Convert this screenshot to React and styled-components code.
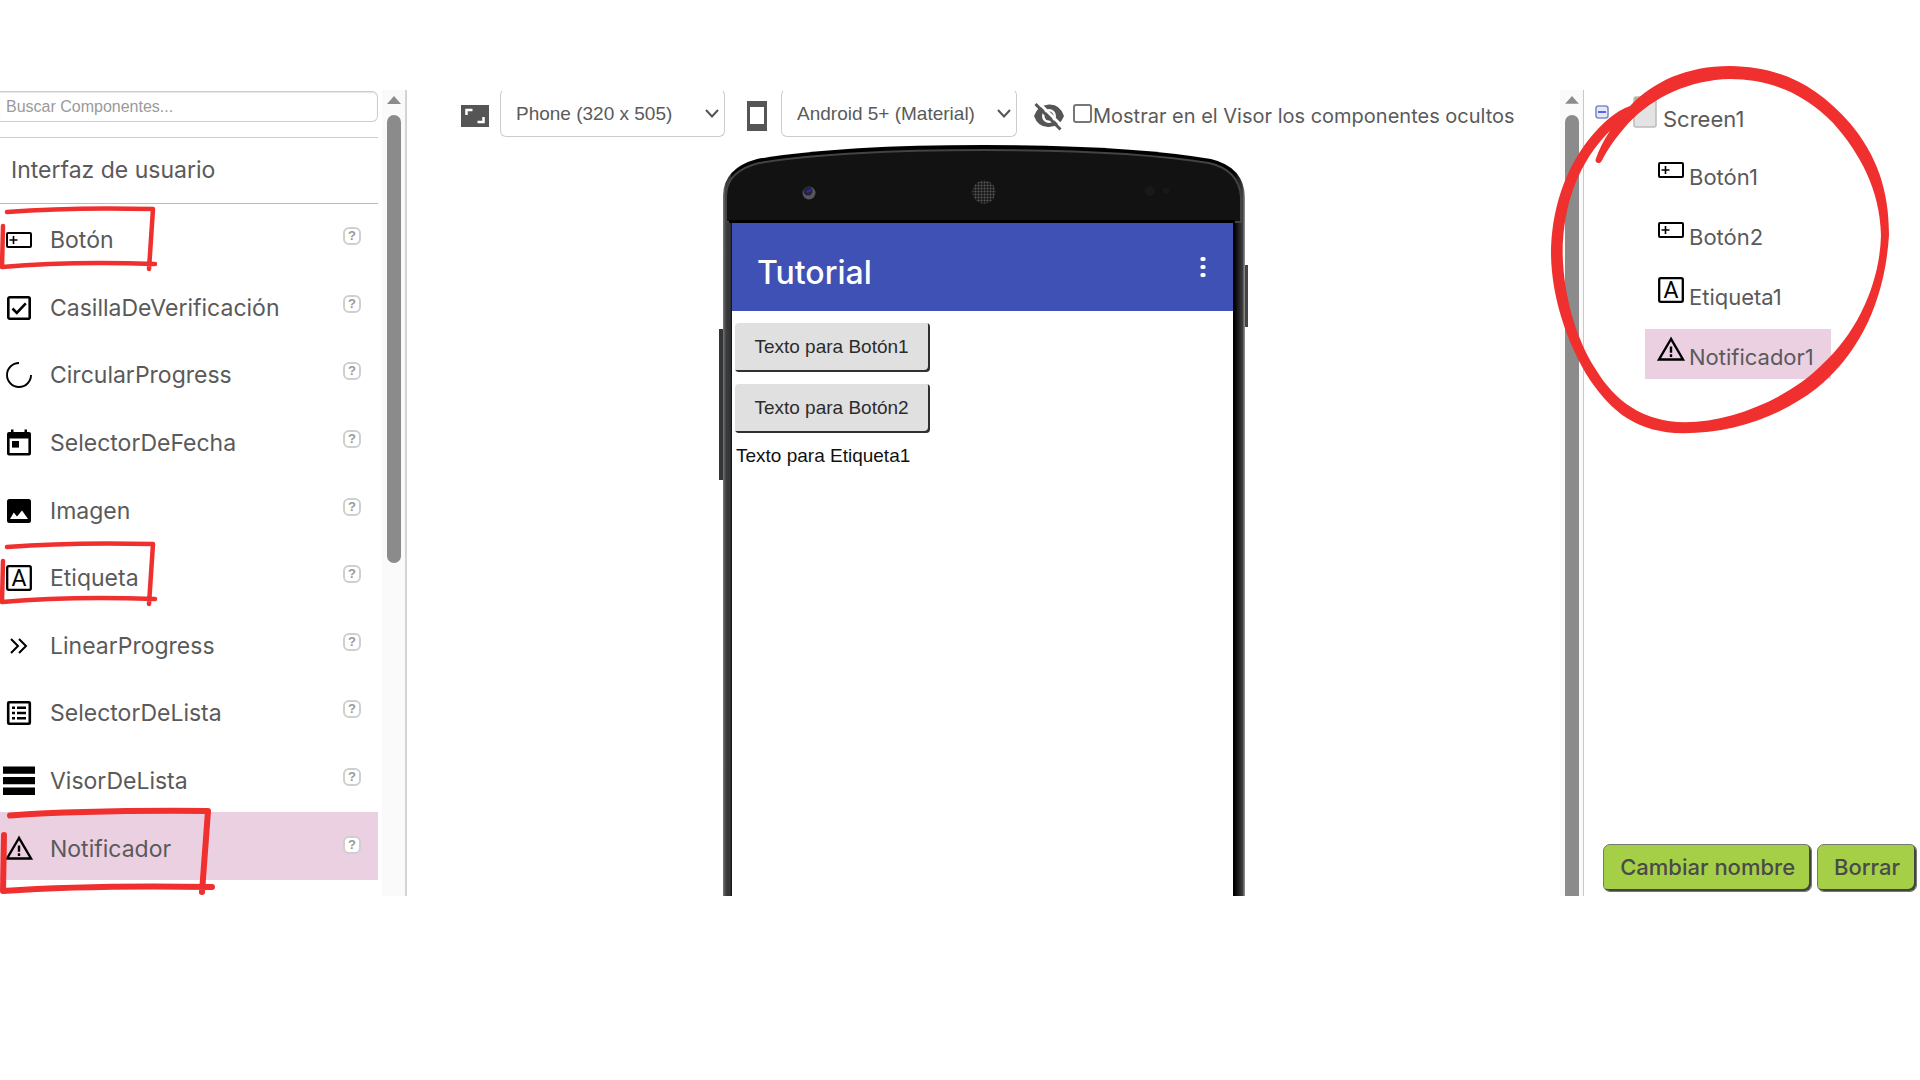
import React from "react";
import styled, { createGlobalStyle } from "styled-components";

const GlobalStyle = createGlobalStyle`
  *, *::before, *::after { box-sizing: border-box; }
  body {
    margin: 0;
    background: #fff;
    color: #5a5a5a;
    font-family: Inter, "Open Sans", sans-serif;
  }
`;

const ARIAL = '"Liberation Sans", Arial, sans-serif';
const RED = "#ef302e";
const PINK = "#ebd0e2";

const Page = styled.main`
  padding: 90px 0;
  overflow: hidden;
`;

const Workspace = styled.div`
  display: grid;
  grid-template-columns: 407px minmax(0, 1fr) 336px;
  min-height: 806px;
`;

/* Palette */

const PalettePanel = styled.aside`
  position: relative;
  display: flex;
  justify-content: space-between;
  border-right: 2px solid #d4d4d4;
`;

const PaletteColumn = styled.div`
  display: flex;
  flex-direction: column;
  width: 378px;
  padding: 1px 0 16px;
`;

const SearchInput = styled.input`
  height: 31px;
  margin: 0 0 15px;
  padding: 0 6px;
  border: 1px solid #ccc;
  border-left: 0;
  border-radius: 0 6px 6px 0;
  background: #fff;
  font: 16px ${ARIAL};
  outline: none;
  box-shadow: inset 0 1px 1px #e6e6e6;
  &::placeholder { color: #9a9a9a; opacity: 1; }
`;

const CategoryTitle = styled.h2`
  display: flex;
  align-items: center;
  height: 67px;
  margin: 0;
  padding: 0 11px 2px;
  border-top: 1px solid #ccc;
  border-bottom: 1px solid #bbb;
  font-size: 23px;
  font-weight: 400;
`;

const ComponentList = styled.ul`
  display: grid;
  grid-auto-rows: 1fr;
  flex: 1;
  margin: 0;
  padding: 0;
  list-style: none;
`;

const ComponentRow = styled.li`
  display: flex;
  align-items: center;
  padding: 5px 17px 0 3px;
  background: ${(p) => (p.$active ? PINK : "transparent")};
`;

const RowIcon = styled.svg`
  flex: none;
  width: 32px;
  height: 32px;
`;

const RowName = styled.span`
  flex: 1;
  padding-left: 15px;
  font-size: 23px;
  line-height: 32px;
`;

const HelpButton = styled.button`
  width: 18px;
  height: 18px;
  margin-bottom: 8px;
  padding: 0;
  border: 2px solid #cfcfcf;
  border-radius: 6px;
  background: #fff;
  color: #999;
  font: bold 13px/14px ${ARIAL};
`;

const Scrollbar = styled.div`
  display: flex;
  flex-direction: column;
  align-items: center;
  width: 23px;
  padding: 6px 0 0;
  background: #fafafa;
`;

const ScrollArrow = styled.svg`
  width: 14px;
  height: 8px;
  margin-bottom: 11px;
`;

const ScrollThumb = styled.div`
  width: 14px;
  height: ${(p) => p.$height};
  border-radius: ${(p) => (p.$cut ? "7px 7px 0 0" : "7px")};
  background: #8b8b8b;
`;

/* Viewer */

const ViewerPanel = styled.section`
  display: flex;
  justify-content: space-between;
  overflow: hidden;
  border-right: 1px solid #c8c8c8;
`;

const Viewer = styled.div`
  flex: 1;
  display: flex;
  flex-direction: column;
  align-items: center;
  height: 806px;
  overflow: hidden;
`;

const Toolbar = styled.div`
  display: flex;
  align-items: center;
  align-self: flex-start;
  flex: none;
  height: 48px;
  margin: -1px 0 8px;
  padding-left: 54px;
`;

const ToolIcon = styled.svg`
  flex: none;
  width: ${(p) => p.$width}px;
  height: 32px;
  margin-top: 6px;
`;

const SelectBox = styled.label`
  position: relative;
  margin: 0 ${(p) => p.$after}px 0 ${(p) => p.$before}px;
`;

const Select = styled.select`
  appearance: none;
  display: block;
  width: ${(p) => p.$width}px;
  height: 48px;
  padding: 0 15px;
  border: 1px solid #ccc;
  border-top-color: #fff;
  border-radius: 6px;
  background: #fff;
  color: #5a5a5a;
  font: 19px ${ARIAL};
`;

const Chevron = styled.svg`
  position: absolute;
  right: 6px;
  top: 20px;
  width: 14px;
  height: 9px;
  pointer-events: none;
`;

const HiddenToggle = styled.label`
  display: flex;
  align-items: center;
  font-size: 20px;
  line-height: 28px;
  white-space: nowrap;
`;

const Checkbox = styled.input`
  appearance: none;
  width: 19px;
  height: 19px;
  margin: 0 1px 0 9px;
  border: 2px solid #777;
  border-radius: 3px;
  background: #fff;
`;

const ToggleText = styled.span`
  padding-top: 6px;
`;

const Phone = styled.div`
  position: relative;
  flex: none;
  width: 529px;
  height: 760px;
  padding: 78px 15px 0 13px;
`;

const PhoneShell = styled.svg`
  position: absolute;
  inset: 0;
  width: 529px;
  height: 760px;
`;

const PhoneScreen = styled.div`
  position: relative;
  height: 100%;
  background: #fff;
  font-family: ${ARIAL};
`;

const AppBar = styled.header`
  display: flex;
  align-items: center;
  justify-content: space-between;
  height: 88px;
  padding: 0 26px 0 25px;
  background: #3f51b5;
  color: #fff;
`;

const AppTitle = styled.h1`
  margin: 0;
  padding-top: 10px;
  font: 500 32px Inter, sans-serif;
`;

const MenuButton = styled.button`
  display: flex;
  padding: 0;
  border: 0;
  background: none;
`;

const AppBody = styled.div`
  display: flex;
  flex-direction: column;
  align-items: flex-start;
  gap: 12px;
  padding: 12px 3px;
`;

const AppButton = styled.button`
  width: 195px;
  height: 49px;
  padding: 0 2px 2px 0;
  border: 0;
  border-radius: 4px;
  background: #e0e0e0;
  box-shadow: inset -2px -2px 0 #303030;
  color: #2c2c2c;
  font: 19px ${ARIAL};
`;

const AppLabel = styled.p`
  margin: 0;
  padding-left: 1px;
  color: #111;
  font-size: 19px;
  line-height: 22px;
`;

/* Component tree */

const TreePanel = styled.aside`
  position: relative;
  display: flex;
  flex-direction: column;
  justify-content: space-between;
  padding: 0 3px 4px 11px;
`;

const Tree = styled.ul`
  display: flex;
  flex-direction: column;
  gap: 10px;
  margin: 0;
  padding: 0;
  list-style: none;
`;

const TreeRoot = styled.li`
  display: flex;
  align-items: flex-start;
  height: 49px;
  font-size: 22px;
  line-height: 28px;
`;

const CollapseButton = styled.button`
  display: flex;
  margin: 15px 24px 0 0;
  padding: 0;
  border: 0;
  background: none;
`;

const ScreenIcon = styled.svg`
  width: 24px;
  height: 32px;
  margin: 6px 6px 0 0;
`;

const RootName = styled.span`
  padding-top: 15px;
`;

const TreeItem = styled.li`
  display: flex;
  align-self: flex-start;
  height: 50px;
  margin-left: 50px;
  padding: 0 17px 0 10px;
  background: ${(p) => (p.$active ? PINK : "transparent")};
  font-size: 22px;
  line-height: 28px;
`;

const TreeIcon = styled.svg`
  width: 32px;
  height: 32px;
  margin-top: 5px;
`;

const TreeName = styled.span`
  padding: 14px 0 0 2px;
`;

const Actions = styled.div`
  display: flex;
  justify-content: flex-end;
  gap: 5px;
`;

const ActionButton = styled.button`
  height: 48px;
  padding: 0 16px 2px;
  border: 1px solid #777;
  border-radius: 7px;
  background: #a5cf47;
  box-shadow: inset -2px -2px 0 #444;
  color: #4a4a4a;
  font: 500 22px Inter, sans-serif;
  white-space: nowrap;
`;

/* Hand-drawn marks lie over the interface */

const PaletteMarks = styled.svg`
  position: absolute;
  left: 0;
  top: 0;
  width: 240px;
  height: 820px;
  overflow: visible;
  pointer-events: none;
`;

const CircleMark = styled.svg`
  position: absolute;
  left: -44px;
  top: -30px;
  width: 380px;
  height: 380px;
  pointer-events: none;
`;

const ICONS = {
  button: (
    <g fill="none" stroke="#000">
      <rect x="4" y="9" width="24" height="14" rx="1" strokeWidth="2" />
      <path d="M6.500 16h8M10.500 12v8" strokeWidth="1.600" />
    </g>
  ),
  check: (
    <g fill="none" stroke="#000" strokeWidth="2.600">
      <rect x="5.300" y="5.300" width="21.400" height="21.400" rx="1.500" />
      <path d="M9.500 16.500l4.300 4.300 9-9.500" />
    </g>
  ),
  circular: <path d="M16 4A12 12 0 1 0 28 16" fill="none" stroke="#000" strokeWidth="1.900" />,
  date: (
    <>
      <path fillRule="evenodd" d="M8 2.500h2.500V5h11V2.500H24V5h2q2 0 2 2v19.500q0 2-2 2H6q-2 0-2-2V7q0-2 2-2h2zM6.600 11.500v14.400h18.800V11.500z" />
      <path d="M9 14h7v6.600H9z" />
    </>
  ),
  image: (
    <path fillRule="evenodd" d="M6.500 4h19Q28 4 28 6.500v19q0 2.500-2.500 2.500h-19Q4 28 4 25.500v-19Q4 4 6.500 4zM7 24h18l-6-8.500-5 6-3.200-4z" />
  ),
  label: (
    <>
      <rect x="4.200" y="4.200" width="23.600" height="23.600" rx="1.500" fill="none" stroke="#000" strokeWidth="2.300" />
      <text x="16" y="24" textAnchor="middle" fontFamily="Roboto, sans-serif" fontSize="23">A</text>
    </>
  ),
  linear: <path d="M8 9l7 7-7 7M16 9l7 7-7 7" fill="none" stroke="#000" strokeWidth="2" />,
  list: (
    <>
      <rect x="5.200" y="5.200" width="21.600" height="21.600" rx="1" fill="none" stroke="#000" strokeWidth="2.600" />
      <path d="M9 9.500h3V12H9zM14 9.500h9V12h-9zM9 14.800h3v2.500H9zM14 14.800h9v2.500h-9zM9 20h3v2.500H9zM14 20h9v2.500h-9z" />
    </>
  ),
  bars: <path d="M0 1.500h32v7.300H0zM0 12h32v7.300H0zM0 22.600h32v7.300H0z" />,
  warning: (
    <g fill="none" stroke="#000" strokeWidth="2.400">
      <path d="M16 5L4 25.500h24z" />
      <path d="M16 12.500v6.200M16 20.300v2.800" />
    </g>
  ),
};

const PALETTE = [
  ["Botón", "button"],
  ["CasillaDeVerificación", "check"],
  ["CircularProgress", "circular"],
  ["SelectorDeFecha", "date"],
  ["Imagen", "image"],
  ["Etiqueta", "label"],
  ["LinearProgress", "linear"],
  ["SelectorDeLista", "list"],
  ["VisorDeLista", "bars"],
  ["Notificador", "warning"],
];

const TREE = [
  ["Botón1", "button"],
  ["Botón2", "button"],
  ["Etiqueta1", "label"],
  ["Notificador1", "warning"],
];

function Scroll({ height, cut }) {
  return (
    <Scrollbar>
      <ScrollArrow viewBox="0 0 14 8"><path d="M7 0l7 8H0z" fill="#8b8b8b" /></ScrollArrow>
      <ScrollThumb $height={height} $cut={cut} />
    </Scrollbar>
  );
}

function DropDown({ label, value, width, before, after }) {
  return (
    <SelectBox $before={before} $after={after}>
      <Select $width={width} aria-label={label} defaultValue={value}>
        <option>{value}</option>
      </Select>
      <Chevron viewBox="0 0 14 9"><path d="M1 1l6 6.500L13 1" fill="none" stroke="#555" strokeWidth="2" /></Chevron>
    </SelectBox>
  );
}

function Shell() {
  return (
    <PhoneShell viewBox="0 0 529 760">
      <defs>
        <linearGradient id="edge" x1="0" x2="1">
          <stop offset="0" stopColor="#777" />
          <stop offset="0.006" stopColor="#3a3c3e" />
          <stop offset="0.014" stopColor="#333" />
          <stop offset="0.018" stopColor="#000" />
          <stop offset="0.980" stopColor="#000" />
          <stop offset="0.985" stopColor="#161616" />
          <stop offset="0.995" stopColor="#3a3a3a" />
          <stop offset="1" stopColor="#999" />
        </linearGradient>
        <pattern id="mesh" width="3" height="3" patternUnits="userSpaceOnUse">
          <rect width="3" height="3" fill="#191919" />
          <circle cx="1.500" cy="1.500" r="1" fill="#5a5a5a" />
        </pattern>
      </defs>
      <path d="M0 184h5v151H0z" fill="#333537" />
      <path d="M524 120h5v62h-5z" fill="#444" />
      <path d="M4 760V50Q5 23 38 14Q120 0 265 0T492 14Q525 22 526 52V760z" fill="url(#edge)" />
      <path d="M7 77V50Q8 26 40 18Q120 5 265 5T490 18Q520 25 522 52V77z" fill="#121212" stroke="#414346" strokeWidth="2" />
      <path d="M10 75h506v3H10z" fill="#000" />
      <circle cx="90" cy="48" r="6.500" fill="#55555a" />
      <circle cx="89" cy="46" r="4.500" fill="#24243c" />
      <path d="M88 47l4-2" stroke="#2b2bb0" strokeWidth="2" />
      <circle cx="265" cy="47" r="11.500" fill="url(#mesh)" />
      <circle cx="431" cy="46" r="5" fill="#1c1818" />
      <circle cx="447" cy="46" r="3" fill="#1c1818" />
    </PhoneShell>
  );
}

export default function App() {
  return (
    <>
      <GlobalStyle />
      <Page>
        <Workspace>
          <PalettePanel>
            <PaletteColumn>
              <SearchInput type="text" aria-label="Buscar Componentes" placeholder="Buscar Componentes..." />
              <CategoryTitle>Interfaz de usuario</CategoryTitle>
              <ComponentList>
                {PALETTE.map(([name, icon]) => (
                  <ComponentRow key={name} $active={name === "Notificador"}>
                    <RowIcon viewBox="0 0 32 32">{ICONS[icon]}</RowIcon>
                    <RowName>{name}</RowName>
                    <HelpButton type="button">?</HelpButton>
                  </ComponentRow>
                ))}
              </ComponentList>
            </PaletteColumn>
            <Scroll height="448px" />
            <PaletteMarks viewBox="0 0 240 820" fill="none" stroke={RED} strokeWidth="4.500" strokeLinecap="round" strokeLinejoin="round">
              <path d="M7 122Q70 117 153 119L149 179M3 136L2 177Q70 171 155 174" />
              <path d="M7 457Q70 452 153 454L149 514M3 471L2 512Q70 506 155 509" />
              <path strokeWidth="6" d="M10 725.500Q90 720 208 721L202 802M4 745L3 801Q90 795 212 797" />
            </PaletteMarks>
          </PalettePanel>

          <ViewerPanel>
            <Viewer>
              <Toolbar>
                <ToolIcon $width={28} viewBox="0 0 28 32">
                  <path d="M0 5h28v22H0z" fill="#555" />
                  <path d="M5.500 15V10h6M22.500 17v5h-6" fill="none" stroke="#fff" strokeWidth="2.500" />
                </ToolIcon>
                <DropDown label="Tamaño" value="Phone (320 x 505)" width={225} before={11} after={22} />
                <ToolIcon $width={20} viewBox="0 0 20 32">
                  <path fillRule="evenodd" d="M0 1h20v30H0zM3 7v17h14V7z" fill="#555" />
                </ToolIcon>
                <DropDown label="Tema" value="Android 5+ (Material)" width={236} before={14} after={17} />
                <ToolIcon $width={30} viewBox="0 0 30 32">
                  <path d="M0 16Q4 5 15 4.500T30 16Q26 26.500 15 27T0 16z" fill="#555" />
                  <circle cx="15" cy="16" r="7" fill="#fff" />
                  <circle cx="15" cy="16" r="4.500" fill="#555" />
                  <path d="M3.500 1.500L29 27" stroke="#fff" strokeWidth="3" />
                  <path d="M1.500 4L26.500 29.500" stroke="#555" strokeWidth="3" />
                </ToolIcon>
                <HiddenToggle>
                  <Checkbox type="checkbox" />
                  <ToggleText>Mostrar en el Visor los componentes ocultos</ToggleText>
                </HiddenToggle>
              </Toolbar>
              <Phone>
                <Shell />
                <PhoneScreen>
                  <AppBar>
                    <AppTitle>Tutorial</AppTitle>
                    <MenuButton type="button" aria-label="Menú">
                      <svg width="8" height="22" viewBox="0 0 8 22" fill="#fff">
                        <rect x="1.500" y="1" width="5" height="4" rx="1.500" />
                        <rect x="1.500" y="9" width="5" height="4" rx="1.500" />
                        <rect x="1.500" y="17" width="5" height="4" rx="1.500" />
                      </svg>
                    </MenuButton>
                  </AppBar>
                  <AppBody>
                    <AppButton type="button">Texto para Botón1</AppButton>
                    <AppButton type="button">Texto para Botón2</AppButton>
                    <AppLabel>Texto para Etiqueta1</AppLabel>
                  </AppBody>
                </PhoneScreen>
              </Phone>
            </Viewer>
            <Scroll height="100%" cut />
          </ViewerPanel>

          <TreePanel>
            <Tree>
              <TreeRoot>
                <CollapseButton type="button" aria-label="Contraer">
                  <svg width="14" height="14" viewBox="0 0 14 14">
                    <rect x="1" y="1" width="12" height="12" rx="2.500" fill="#e4e9f8" stroke="#7f8cc9" strokeWidth="1.600" />
                    <path d="M3 7h8" stroke="#3535d8" strokeWidth="1.500" />
                  </svg>
                </CollapseButton>
                <ScreenIcon viewBox="0 0 24 32">
                  <rect x="1" y="1" width="22" height="30" rx="2" fill="#e3e3e3" stroke="#bcbcbc" strokeWidth="1.500" />
                  <path d="M2 1.500h20V6H2z" fill="#a5c24a" />
                </ScreenIcon>
                <RootName>Screen1</RootName>
              </TreeRoot>
              {TREE.map(([name, icon]) => (
                <TreeItem key={name} $active={name === "Notificador1"}>
                  <TreeIcon viewBox="0 0 32 32">{ICONS[icon]}</TreeIcon>
                  <TreeName>{name}</TreeName>
                </TreeItem>
              ))}
            </Tree>
            <Actions>
              <ActionButton type="button">Cambiar nombre</ActionButton>
              <ActionButton type="button">Borrar</ActionButton>
            </Actions>
            <CircleMark viewBox="0 0 1140 1140">
              <path
                fill={RED}
                fillRule="evenodd"
                d="M167 298C176 270 192 240 210 212C120 300 68 430 68 580C70 700 105 830 165 925C225 1025 310 1086 435 1087C570 1085 740 1020 845 915C960 810 1020 660 1023 525C1020 390 960 280 880 190C790 95 680 57 570 57C450 60 340 110 265 190C225 235 205 265 185 303C180 313 164 310 167 298ZM270 138C340 65 440 18 570 18C720 20 830 75 930 190C1010 285 1047 390 1047 525C1035 720 960 880 830 985C720 1070 580 1120 430 1120C290 1118 215 1055 150 960C80 850 35 710 33 585C33 450 75 330 145 240C190 185 225 155 270 138Z"
              />
            </CircleMark>
          </TreePanel>
        </Workspace>
      </Page>
    </>
  );
}
